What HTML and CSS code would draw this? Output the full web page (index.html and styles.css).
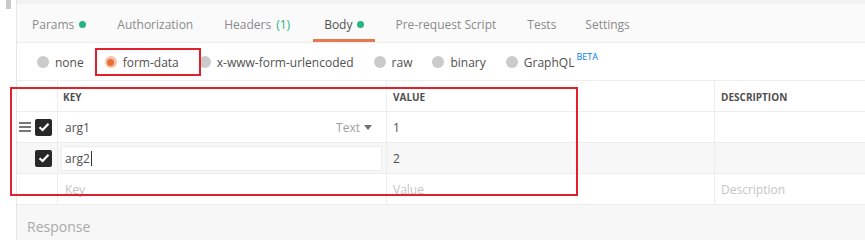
FILE: index.html
```html
<!DOCTYPE html>
<html lang="en">
<head>
  <meta charset="UTF-8">
  <title>Body - form-data</title>
  <link rel="stylesheet" href="styles.css">
</head>
<body>
  <div class="app">
    <div class="side">
      <div class="thumb"></div>
    </div>
    <div class="main">
      <div class="tabs">
        <div class="tab">Params <span class="dot"></span></div>
        <div class="tab">Authorization</div>
        <div class="tab">Headers <span class="count">(1)</span></div>
        <div class="tab active">Body <span class="dot"></span></div>
        <div class="tab">Pre-request Script</div>
        <div class="tab">Tests</div>
        <div class="tab">Settings</div>
      </div>

      <div class="modes">
        <label class="mode"><span class="radio"></span>none</label>
        <label class="mode"><span class="radio on"></span>form-data</label>
        <label class="mode"><span class="radio"></span>x-www-form-urlencoded</label>
        <label class="mode"><span class="radio"></span>raw</label>
        <label class="mode"><span class="radio"></span>binary</label>
        <label class="mode"><span class="radio"></span>GraphQL<sup class="beta">BETA</sup></label>
      </div>

      <div class="table">
        <div class="row head">
          <div class="cell handle"></div>
          <div class="cell key">KEY</div>
          <div class="cell value">VALUE</div>
          <div class="cell desc">DESCRIPTION</div>
        </div>
        <div class="row">
          <div class="cell handle">
            <span class="bars"><i></i><i></i><i></i></span>
            <span class="check"><svg width="12" height="10" viewBox="0 0 12 10"><path d="M1.5 5.2 L4.6 8 L10.5 1.8" fill="none" stroke="#fff" stroke-width="2.2"/></svg></span>
          </div>
          <div class="cell key">arg1<span class="type">Text <span class="caret"></span></span></div>
          <div class="cell value">1</div>
          <div class="cell desc"></div>
        </div>
        <div class="row editing">
          <div class="cell handle">
            <span class="check"><svg width="12" height="10" viewBox="0 0 12 10"><path d="M1.5 5.2 L4.6 8 L10.5 1.8" fill="none" stroke="#fff" stroke-width="2.2"/></svg></span>
          </div>
          <div class="cell key"><div class="input">arg2<span class="cursor"></span></div></div>
          <div class="cell value">2</div>
          <div class="cell desc"></div>
        </div>
        <div class="row empty">
          <div class="cell handle"></div>
          <div class="cell key">Key</div>
          <div class="cell value">Value</div>
          <div class="cell desc">Description</div>
        </div>
      </div>

      <div class="response">Response</div>
    </div>
  </div>

  <div class="mark mark-mode"></div>
  <div class="mark mark-table"></div>
</body>
</html>
```

FILE: styles.css
```css
* {
  margin: 0;
  padding: 0;
  box-sizing: border-box;
}
html, body {
  height: 100%;
  font-family: 'Open Sans', 'Noto Sans', sans-serif;
  font-size: 12px;
  color: #505050;
  background: #fff;
  overflow: hidden;
}
.app {
  display: flex;
  height: 240px;
}
.side {
  width: 17px;
  flex-shrink: 0;
  border-right: 1px solid #e6e6e6;
  background: #fff;
  padding-left: 6px;
}
.thumb {
  width: 5px;
  height: 9px;
  background: #c9c9c9;
}
.main {
  flex-grow: 1;
  display: flex;
  flex-direction: column;
  border-top: 4px solid #f3f3f3;
}
.tabs,
.modes,
.table {
  flex-shrink: 0;
}
.tabs {
  display: flex;
  height: 39px;
  background: #fafafa;
  border-bottom: 1px solid #ececec;
  padding-left: 4px;
}
.tab {
  display: flex;
  align-items: center;
  gap: 5px;
  padding: 2px 11px 0 11px;
  margin-right: 9px;
  color: #8a8a8a;
  position: relative;
}
.tab:nth-child(3) {
  margin-right: 12px;
}
.tab:nth-child(6) {
  margin-right: 7px;
}
.tab.active {
  color: #505050;
}
.tab.active::after {
  content: '';
  position: absolute;
  left: 0;
  right: 0;
  bottom: 0;
  height: 3px;
  background: #e5794b;
}
.dot {
  width: 7px;
  height: 7px;
  border-radius: 50%;
  background: #26b47f;
  margin-top: 1px;
}
.count {
  color: #26b47f;
}
.modes {
  display: flex;
  align-items: center;
  height: 38px;
  padding: 1px 0 0 20px;
  border-bottom: 1px solid #ededed;
}
.mode {
  display: flex;
  align-items: center;
  gap: 6px;
  margin-right: 20px;
  color: #505050;
}
.mode:first-child {
  margin-right: 21px;
}
.radio {
  width: 12px;
  height: 12px;
  border-radius: 50%;
  background: #cbcbcb;
}
.radio.on {
  background: #f0c5ac;
  display: flex;
  align-items: center;
  justify-content: center;
}
.radio.on::after {
  content: '';
  width: 7px;
  height: 7px;
  border-radius: 50%;
  background: #ec6d36;
}
.beta {
  font-size: 9px;
  color: #097bed;
  margin-left: -4px;
  position: relative;
  top: -6px;
}
.table {
  display: flex;
  flex-direction: column;
}
.row {
  display: flex;
  height: 31px;
  border-bottom: 1px solid #ededed;
}
.cell {
  display: flex;
  align-items: center;
  padding: 0 6px;
  border-right: 1px solid #ededed;
}
.handle {
  width: 41px;
  flex-shrink: 0;
  justify-content: flex-end;
  gap: 4px;
  padding: 0 5px 0 0;
}
.key {
  width: 329px;
  flex-shrink: 0;
  padding-left: 7px;
  position: relative;
}
.value {
  width: 328px;
  flex-shrink: 0;
}
.desc {
  flex-grow: 1;
  border-right: none;
}
.head .cell {
  font-size: 10px;
  font-weight: 700;
  color: #505050;
  padding-top: 1px;
}
.head .key {
  padding-left: 5px;
}
.bars {
  display: flex;
  flex-direction: column;
  gap: 2px;
}
.bars i {
  display: block;
  width: 12px;
  height: 2px;
  background: #777;
}
.check {
  width: 17px;
  height: 17px;
  border-radius: 2px;
  background: #282828;
  display: flex;
  align-items: center;
  justify-content: center;
}
.type {
  margin-left: auto;
  margin-right: 8px;
  color: #a0a0a0;
  display: flex;
  align-items: center;
  gap: 4px;
}
.caret {
  width: 0;
  height: 0;
  border-left: 4px solid transparent;
  border-right: 4px solid transparent;
  border-top: 5px solid #707070;
}
.editing {
  background: #f7f7f7;
}
.editing .key {
  padding: 0 4px 0 3px;
}
.input {
  flex-grow: 1;
  height: 25px;
  background: #fff;
  border: 1px solid #ededed;
  display: flex;
  align-items: center;
  padding-left: 3px;
}
.cursor {
  width: 1px;
  height: 15px;
  background: #333;
  margin-left: 1px;
}
.empty .cell {
  color: #c4c4c4;
}
.response {
  flex-grow: 1;
  background: #f7f7f7;
  color: #a9a9a9;
  font-size: 14px;
  padding: 12px 10px;
}
.mark {
  position: absolute;
  border: 2px solid #e0202a;
}
.mark-mode {
  left: 95px;
  top: 48px;
  width: 106px;
  height: 28px;
}
.mark-table {
  left: 10px;
  top: 87px;
  width: 568px;
  height: 109px;
}
```
